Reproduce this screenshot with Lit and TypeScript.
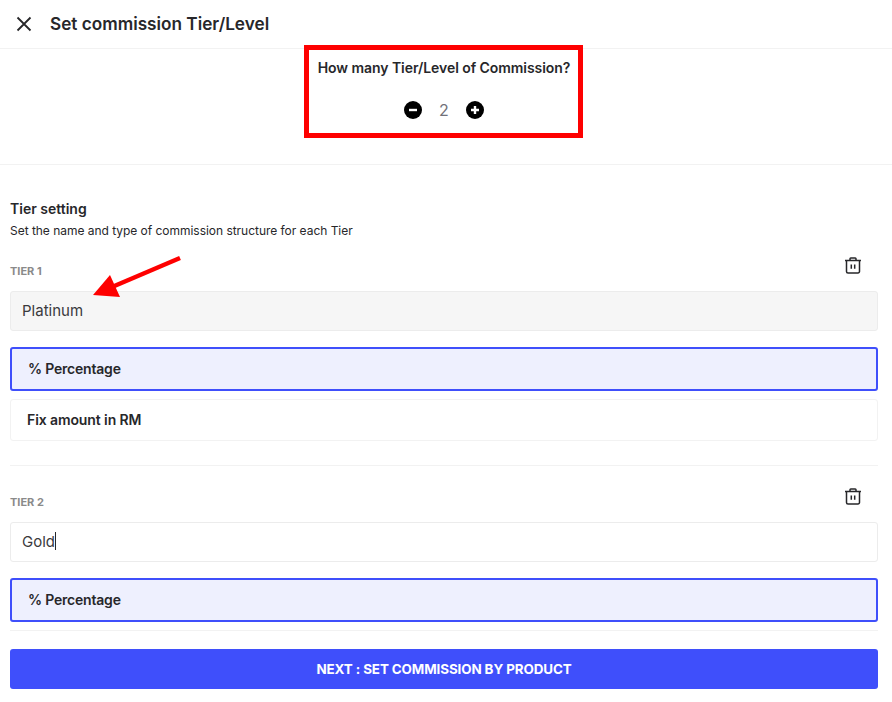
import { css, html, LitElement, nothing, svg } from "lit";
import { customElement } from "lit/decorators.js";

const trashIcon = svg`
  <path d="M1 3.5h16M2.5 3.5V14.5a1.5 1.5 0 0 0 1.5 1.5h10a1.5 1.5 0 0 0 1.5-1.5V3.5M6 3.5V1.8a.8.8 0 0 1 .8-.8h4.4a.8.8 0 0 1 .8.8v1.7M7.3 7.5v4.2M10.7 7.5v4.2" />
`;

const tiers = [
  { label: "TIER 1", name: "Platinum", locked: true, caret: false, fixed: true },
  { label: "TIER 2", name: "Gold", locked: false, caret: true, fixed: false },
];

@customElement("app-root")
export default class AppRoot extends LitElement {
  static styles = css`
    :host {
      display: block;
      position: relative;
      height: 702px;
      overflow: hidden;
      background: #fff;
      color: #27272a;
      font-family: Inter, "Liberation Sans", sans-serif;
    }

    .header {
      display: flex;
      align-items: center;
      gap: 18px;
      height: 48px;
      padding-left: 16px;
      border-bottom: 1px solid #f2f2f2;
    }

    .header svg {
      width: 16px;
      height: 16px;
      fill: none;
      stroke: #27272a;
      stroke-width: 1.8;
    }

    .header h1 {
      margin: 0 0 2px;
      font-size: 17.2px;
      font-weight: 600;
    }

    .count {
      display: flex;
      flex-direction: column;
      align-items: center;
      height: 116px;
      box-sizing: border-box;
      padding: 10px 4px 0 0;
      border-bottom: 1px solid #f2f2f2;
    }

    .count h2 {
      margin: 0;
      font-size: 14px;
      line-height: 17px;
      font-weight: 600;
      letter-spacing: -0.06px;
    }

    .stepper {
      display: flex;
      align-items: center;
      gap: 17px;
      margin-top: 25px;
      font-size: 16px;
      line-height: 18px;
      color: #71717a;
    }

    .stepper svg {
      display: block;
      width: 18px;
      height: 18px;
    }

    .settings {
      padding: 35px 14px 0 10px;
    }

    .settings h3 {
      margin: 0;
      font-size: 14px;
      line-height: 17px;
      font-weight: 600;
    }

    .settings p {
      margin: 6px 0 23px;
      font-size: 12px;
      line-height: 15px;
      letter-spacing: -0.03px;
    }

    .tier {
      border-bottom: 1px solid #f2f2f2;
      padding-bottom: 24px;
      margin-bottom: 26px;
    }

    .tier.last {
      border-bottom: none;
      padding-bottom: 0;
      margin-bottom: 0;
    }

    .tier-head {
      display: flex;
      justify-content: space-between;
      align-items: flex-start;
      height: 30px;
    }

    .tier-label {
      margin-top: 4px;
      font-size: 11px;
      line-height: 13px;
      font-weight: 700;
      color: #8a8a8a;
    }

    .trash {
      width: 18px;
      height: 18px;
      margin: -4px 16px 0 0;
      fill: none;
      stroke: #27272a;
      stroke-width: 1.5;
    }

    .name {
      display: flex;
      align-items: center;
      height: 40px;
      box-sizing: border-box;
      padding: 0 0 2px 11px;
      border: 1px solid #ececec;
      border-radius: 3px;
      font-size: 15px;
      color: #3a3a3d;
    }

    .name.locked {
      background: #f6f6f6;
    }

    .caret {
      width: 1px;
      height: 18px;
      background: #27272a;
    }

    .option {
      display: flex;
      align-items: center;
      box-sizing: border-box;
      font-size: 14px;
      font-weight: 600;
      letter-spacing: -0.1px;
      border-radius: 3px;
    }

    .option.selected {
      height: 44px;
      margin-top: 16px;
      padding: 0 0 2px 16px;
      letter-spacing: -0.2px;
      background: #eef0fe;
      border: 2px solid #3f4ffb;
    }

    .option.plain {
      height: 42px;
      margin-top: 8px;
      padding: 0 0 2px 16px;
      border: 1px solid #f2f2f2;
    }

    .clipped-top {
      height: 1px;
      margin-top: 8px;
      background: #f2f2f2;
    }

    .next {
      display: flex;
      align-items: center;
      justify-content: center;
      height: 40px;
      margin-top: 18px;
      border-radius: 3px;
      background: #3f4ffb;
      color: #fff;
      font-size: 13.4px;
      font-weight: 700;
      letter-spacing: -0.1px;
    }

    /* annotations drawn over the screenshot */
    .red-box {
      position: absolute;
      left: 304px;
      top: 45px;
      width: 279px;
      height: 93px;
      box-sizing: border-box;
      border: 5px solid #fe0000;
    }

    .arrow {
      position: absolute;
      left: 85px;
      top: 250px;
      width: 105px;
      height: 55px;
    }
  `;

  private renderTier(tier: (typeof tiers)[number]) {
    return html`
      <div class="tier ${tier.fixed ? "" : "last"}">
        <div class="tier-head">
          <span class="tier-label">${tier.label}</span>
          <svg class="trash" viewBox="0 0 18 18">${trashIcon}</svg>
        </div>
        <div class="name ${tier.locked ? "locked" : ""}">
          ${tier.name}${tier.caret ? html`<span class="caret"></span>` : nothing}
        </div>
        <div class="option selected">% Percentage</div>
        ${tier.fixed
          ? html`<div class="option plain">Fix amount in RM</div>`
          : html`<div class="clipped-top"></div>`}
      </div>
    `;
  }

  render() {
    return html`
      <header class="header">
        <svg viewBox="0 0 16 16"><path d="M1.5 1.5l13 13M14.5 1.5l-13 13" /></svg>
        <h1>Set commission Tier/Level</h1>
      </header>
      <section class="count">
        <h2>How many Tier/Level of Commission?</h2>
        <div class="stepper">
          <svg viewBox="0 0 18 18">
            <circle cx="9" cy="9" r="9" fill="#000" />
            <path d="M5 9h8" stroke="#fff" stroke-width="2.4" />
          </svg>
          <span>2</span>
          <svg viewBox="0 0 18 18">
            <circle cx="9" cy="9" r="9" fill="#000" />
            <path d="M5 9h8M9 5v8" stroke="#fff" stroke-width="2.4" />
          </svg>
        </div>
      </section>
      <section class="settings">
        <h3>Tier setting</h3>
        <p>Set the name and type of commission structure for each Tier</p>
        ${tiers.map((t) => this.renderTier(t))}
        <div class="next">NEXT : SET COMMISSION BY PRODUCT</div>
      </section>
      <div class="red-box"></div>
      <svg class="arrow" viewBox="85 250 105 55">
        <path d="M180 258L112 287" stroke="#fe0000" stroke-width="4.5" />
        <path d="M93 295L110 275L120 297Z" fill="#fe0000" />
      </svg>
    `;
  }
}
